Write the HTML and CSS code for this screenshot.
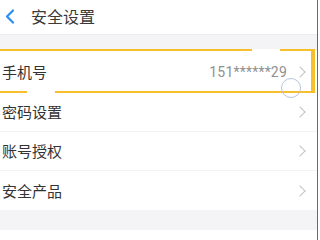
FILE: index.html
```html
<!DOCTYPE html>
<html>
<head>
<meta charset="utf-8">
<link rel="stylesheet" href="styles.css">
</head>
<body>
<div class="screen">
  <div class="page">
    <div class="header">
      <svg class="back" width="10" height="15" viewBox="0 0 10 15"><path d="M8 1.5 L2 7.5 L8 13.5" fill="none" stroke="#2b8ff0" stroke-width="2.2" stroke-linecap="round" stroke-linejoin="round"/></svg>
      <span class="title">安全设置</span>
    </div>
    <div class="band"></div>
    <div class="list">
      <div class="row first"><span class="label">手机号</span><span class="value">151******29</span><span class="chev"></span></div>
      <div class="row"><span class="label">密码设置</span><span class="chev"></span></div>
      <div class="row"><span class="label">账号授权</span><span class="chev"></span></div>
      <div class="row"><span class="label">安全产品</span><span class="chev"></span></div>
    </div>
    <div class="band bottom"></div>
    <div class="rest"></div>
    <div class="highlight"><span class="gap g1"></span><span class="gap g2"></span></div>
    <div class="touch"></div>
  </div>
</div>
</body>
</html>
```
FILE: styles.css
```css
html, body { margin: 0; padding: 0; background: #fff; }
body { font-family: "Noto Sans CJK SC", "Noto Sans", sans-serif; }
.screen { width: 320px; height: 240px; overflow: hidden; display: flex; }
.page {
  position: relative;
  width: 317px;
  height: 240px;
  border-right: 1px solid #6a6a6a;
  display: flex;
  flex-direction: column;
  background: #fff;
}
.header {
  height: 34px;
  display: flex;
  align-items: center;
  padding-left: 5px;
  border-bottom: 1px solid #ececee;
  box-sizing: content-box;
}
.back { margin-right: 16px; margin-top: -2px; }
.title { font-size: 16px; color: #3a3a3a; line-height: 20px; margin-top: -2px; }
.band { height: 16px; background: #f4f4f6; }
.band.bottom { height: 20px; }
.list { display: flex; flex-direction: column; }
.row {
  height: 39px;
  display: flex;
  align-items: center;
  padding-left: 2px;
  padding-right: 10px;
  border-bottom: 1px solid #f3f3f5;
  box-sizing: border-box;
}
.row:last-child { border-bottom: none; }
.row.first { height: 42px; }
.label { font-size: 15px; color: #333; flex: 1; line-height: 20px; }
.value { font-family: Roboto, "Liberation Sans", sans-serif; font-size: 14px; color: #909090; margin-right: 9px; letter-spacing: 0.2px; }
.chev {
  width: 7px; height: 7px;
  border-top: 1.5px solid #c4c4c8;
  border-right: 1.5px solid #c4c4c8;
  transform: rotate(45deg);
  margin-right: 3px;
}
.rest { flex: 1; background: #fff; }
.highlight {
  position: absolute;
  left: -4px;
  top: 49px;
  width: 315px;
  height: 40px;
  border-top: 2px solid #f8bf2c;
  border-bottom: 2px solid #f8bf2c;
  border-right: 4px solid #f8bf2c;
}
.gap { position: absolute; height: 3px; background: #fff; }
.g1 { left: 256px; width: 28px; top: -2px; }
.g2 { left: 31px; width: 28px; bottom: -2px; }
.touch {
  position: absolute;
  left: 281px;
  top: 78px;
  width: 18px;
  height: 18px;
  border: 1.5px solid #b9c4dc;
  border-radius: 50%;
}
```
